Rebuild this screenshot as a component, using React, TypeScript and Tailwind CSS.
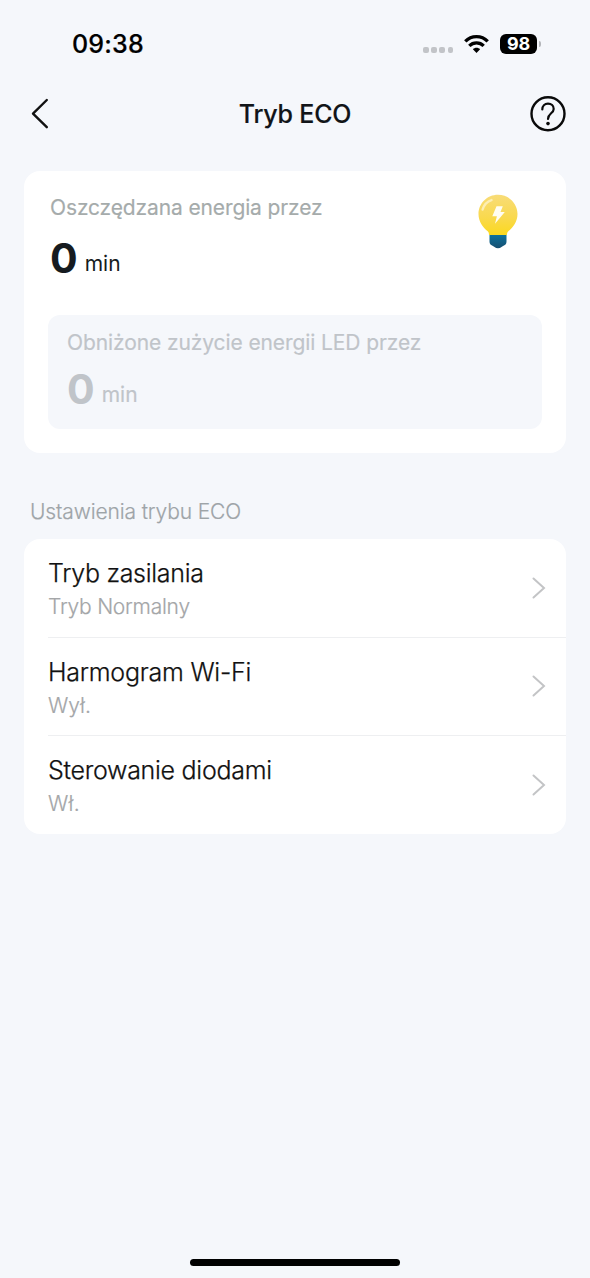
import React from 'react';

type Setting = { title: string; value: string; titleClass: string; valueClass: string; padClass: string };

const settings: Setting[] = [
  { title: 'Tryb zasilania', value: 'Tryb Normalny', titleClass: 'tracking-[-0.3px]', valueClass: 'tracking-[-0.24px]', padClass: 'pt-[2px]' },
  { title: 'Harmogram Wi-Fi', value: 'Wył.', titleClass: 'tracking-[-0.23px]', valueClass: 'tracking-[0px]', padClass: 'pt-[3px]' },
  { title: 'Sterowanie diodami', value: 'Wł.', titleClass: 'tracking-[-0.28px]', valueClass: 'tracking-[0.3px]', padClass: 'pt-[2px]' },
];

function StatusBar() {
  return (
    <header className="flex h-[87px] items-center justify-between pl-[72px] pr-[49px]">
      <span className="text-[25px] leading-8 font-medium tracking-[0.2px] text-black [-webkit-text-stroke:0.2px_#000]">09:38</span>
      <div className="flex items-center">
        <div className="mt-[13px] flex gap-[2.6px]">
          {[0, 1, 2, 3].map((dot) => (
            <span key={dot} className="size-[5.5px] rounded-[2px] bg-[#c2c4c8]" />
          ))}
        </div>
        <svg className="ml-[11px] h-[19px] w-[25px]" viewBox="0 0 25 19" fill="none" stroke="#000" strokeWidth="3.3">
          <path d="M1.3 7.4C7.4 .9 17.6 .9 23.700 7.4" />
          <path d="M5.300 11.900C9.300 7.900 15.700 7.900 19.700 11.900" />
          <path d="M8.900 15.300C10.800 13.300 14.200 13.300 16.100 15.300L12.500 18.900Z" fill="#000" stroke="none" />
        </svg>
        <div className="ml-[11px] flex h-[20px] w-[37px] items-center justify-center rounded-[6px] bg-black text-[18px] leading-5 font-bold tracking-[-0.2px] text-white">
          98
        </div>
        <span className="ml-[2px] h-[6px] w-[2px] rounded-r-full bg-[#b4b6ba]" />
      </div>
    </header>
  );
}

function NavBar() {
  return (
    <nav className="grid h-[53px] grid-cols-[36px_1fr_36px] items-center px-6">
      <svg className="ml-[6px] h-[32px] w-[20px]" viewBox="0 0 20 32" fill="none" stroke="#111" strokeWidth="2.4" strokeLinecap="round" strokeLinejoin="round">
        <path d="M16.800 2L3 15.600L16.800 29.200" />
      </svg>
      <h1 className="text-center text-[25px] leading-8 font-medium tracking-[-0.2px] text-[#111418] [-webkit-text-stroke:0.15px_#111418]">Tryb ECO</h1>
      <svg className="size-9" viewBox="0 0 36 36" fill="none" stroke="#0a0a0a" strokeWidth="2.4" strokeLinecap="round">
        <circle cx="18" cy="17.700" r="16.500" />
        <path d="M12.300 13.500C12.300 10 14.700 7.700 18 7.700C21.300 7.700 23.700 9.900 23.700 12.900C23.700 17.300 18 17.300 18 22.900" strokeWidth="2.200" />
        <circle cx="18" cy="27.600" r="1.800" fill="#0a0a0a" stroke="none" />
      </svg>
    </nav>
  );
}

function Bulb() {
  return (
    <svg className="h-[56px] w-[40px]" viewBox="0 0 40 56">
      <defs>
        <linearGradient id="glass" x1="0" y1="0" x2="0" y2="1">
          <stop offset="0" stopColor="#f8dc78" />
          <stop offset="0.550" stopColor="#f9d94f" />
          <stop offset="1" stopColor="#fbd91f" />
        </linearGradient>
        <linearGradient id="base" x1="0" y1="0" x2="0" y2="1">
          <stop offset="0" stopColor="#0d719c" />
          <stop offset="1" stopColor="#174f70" />
        </linearGradient>
      </defs>
      <path d="M20 .7C9 .7.500 9.400.500 20C.500 27.500 4.800 33.300 9.700 37.200C10.700 38.200 10.900 39 11 41H29C29.100 39 29.300 38.200 30.300 37.200C35.200 33.300 39.500 27.500 39.500 20C39.500 9.400 31 .7 20 .7Z" fill="url(#glass)" />
      <path d="M11.500 41H28.500V47.500C28.500 49.700 27.500 51 25.500 51.800C23.500 52.600 23 54.300 20 54.300C17 54.300 16.500 52.600 14.500 51.800C12.500 51 11.500 49.700 11.500 47.500Z" fill="url(#base)" />
      <path d="M18.500 12.200H24.800L22.500 18H26.800L17 29.800L18.900 22.300H14.300Z" fill="#fffdf2" />
      <path d="M4.600 15.500C6.200 10.500 9.500 7.300 13.500 6.100" fill="none" stroke="#fdeeb4" strokeWidth="2.400" strokeLinecap="round" />
    </svg>
  );
}

function SavingsCard() {
  return (
    <section className="mt-[31px] flex h-[282px] flex-col rounded-2xl bg-white px-6">
      <div className="flex h-[144px] justify-between pr-6 pl-[2px]">
        <div className="pt-[23px]">
          <p className="text-[21px] leading-7 tracking-[-0.13px] text-[#a5abab] [-webkit-text-stroke:0.15px_#a5abab]">Oszczędzana energia przez</p>
          <p className="mt-[11px] flex items-baseline text-[#161b20]">
            <span className="text-[41px] leading-[50px] font-bold">0</span>
            <span className="relative -top-[2px] ml-[7px] text-[21px] leading-7">min</span>
          </p>
        </div>
        <div className="pt-[23px]">
          <Bulb />
        </div>
      </div>
      <div className="h-[114px] rounded-xl bg-[#f5f7fb] px-[19px] pt-[14px] text-[#c0c4c9]">
        <p className="text-[21px] leading-7 tracking-[-0.1px] [-webkit-text-stroke:0.15px_#c0c4c9]">Obniżone zużycie energii LED przez</p>
        <p className="mt-[7px] flex items-baseline">
          <span className="text-[41px] leading-[50px] font-bold">0</span>
          <span className="relative -top-[2px] ml-[7px] text-[21px] leading-7 [-webkit-text-stroke:0.15px_#c0c4c9]">min</span>
        </p>
      </div>
    </section>
  );
}

function SettingRow({ item, last }: { item: Setting; last: boolean }) {
  return (
    <li className={`flex items-center justify-between pr-5 ${last ? 'h-[98px]' : 'h-[98.500px] border-b border-[#eeeff1]'}`}>
      <div className={item.padClass}>
        <p className={`text-[25px] leading-8 font-light text-[#111] [-webkit-text-stroke:0.25px_#111] ${item.titleClass}`}>{item.title}</p>
        <p className={`mt-[4px] text-[21px] leading-7 font-light text-[#a4a6a8] [-webkit-text-stroke:0.2px_#a4a6a8] ${item.valueClass}`}>{item.value}</p>
      </div>
      <svg className="h-[22px] w-[14px]" viewBox="0 0 14 22" fill="none" stroke="#c3c4c6" strokeWidth="2" strokeLinecap="round" strokeLinejoin="miter">
        <path d="M1.500 1.500L12 11L1.500 20.500" />
      </svg>
    </li>
  );
}

export default function App() {
  return (
    <div className="flex h-[1278px] w-[590px] flex-col overflow-hidden bg-[#f5f7fb] font-['Inter',sans-serif]">
      <StatusBar />
      <NavBar />
      <main className="flex-1 px-6">
        <SavingsCard />
        <h2 className="mt-[45px] ml-[6px] text-[21px] leading-7 font-light tracking-[-0.13px] text-[#9ea4a8] [-webkit-text-stroke:0.2px_#9ea4a8]">Ustawienia trybu ECO</h2>
        <ul className="mt-[13px] rounded-2xl bg-white pl-6">
          {settings.map((item, i) => (
            <SettingRow key={item.title} item={item} last={i === settings.length - 1} />
          ))}
        </ul>
      </main>
      <div className="mb-[12px] h-[7px] w-[210px] self-center rounded-full bg-black" />
    </div>
  );
}
